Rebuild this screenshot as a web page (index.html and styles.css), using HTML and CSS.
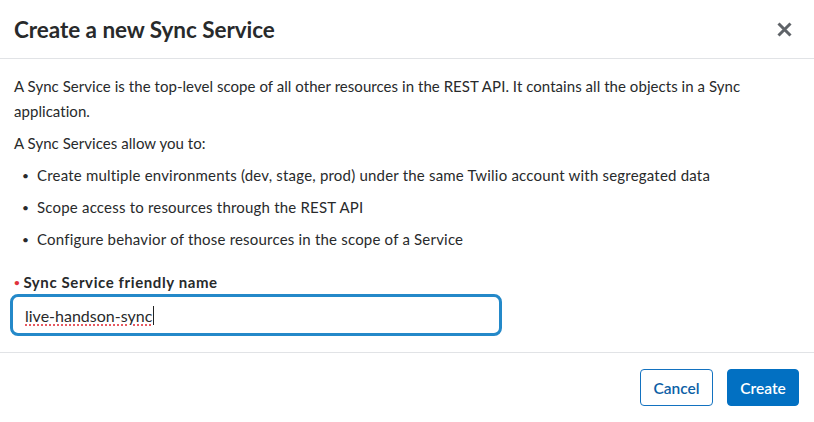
FILE: index.html
```html
<!DOCTYPE html>
<html>
<head>
<meta charset="utf-8">
<link rel="stylesheet" href="styles.css">
</head>
<body>
<div class="modal">
  <header class="modal-header">
    <h1 class="title">Create a new Sync Service</h1>
    <button class="close" aria-label="Close">
      <svg width="15" height="15" viewBox="0 0 15 15"><path d="M1.5 1.5 L13.5 13.5 M13.5 1.5 L1.5 13.5" stroke="#5f6368" stroke-width="3"/></svg>
    </button>
  </header>
  <main class="modal-body">
    <p class="para">A Sync Service is the top-level scope of all other resources in the REST API. It contains all the objects in a Sync application.</p>
    <p class="para">A Sync Services allow you to:</p>
    <ul class="list">
      <li>Create multiple environments (dev, stage, prod) under the same Twilio account with segregated data</li>
      <li>Scope access to resources through the REST API</li>
      <li>Configure behavior of those resources in the scope of a Service</li>
    </ul>
    <label class="label"><span class="req">•</span>Sync Service friendly name</label>
    <div class="input"><span class="value">live-handson-sync</span><span class="caret"></span></div>
  </main>
  <footer class="modal-footer">
    <button class="btn btn-secondary">Cancel</button>
    <button class="btn btn-primary">Create</button>
  </footer>
</div>
</body>
</html>
```
FILE: styles.css
```css
html, body { margin: 0; padding: 0; background: #fff; }
body { font-family: Lato, "Open Sans", sans-serif; color: #282a2b; }
.modal { width: 814px; height: 422px; display: flex; flex-direction: column; }
.modal-header {
  height: 59px; box-sizing: border-box; border-bottom: 1px solid #e1e3e6;
  display: flex; align-items: center; justify-content: space-between;
  padding: 0 22px 0 14px;
}
.title { margin: 0; font-size: 22.5px; font-weight: 700; color: #282a2b; letter-spacing: -0.05px; }
.close { border: 0; background: none; padding: 0; width: 15px; height: 15px; display: flex; cursor: pointer; }
.modal-body { padding: 15px 14px 0 14px; height: 294px; box-sizing: border-box; border-bottom: 1px solid #e1e3e6; }
.para { margin: 0 0 7px 0; font-size: 15px; line-height: 25px; padding-right: 40px; letter-spacing: 0.05px; }
.list { margin: 0; padding: 0 0 0 8px; list-style: none; }
.list li { font-size: 15px; line-height: 25px; margin-top: 7px; position: relative; padding-left: 15px; letter-spacing: 0.2px; }
.list li::before { content: "•"; position: absolute; left: 0; top: 0; font-size: 12px; }
.label { display: block; margin-top: 20px; font-size: 15px; font-weight: 700; line-height: 20px; letter-spacing: 0.6px; }
.req { color: #e0323c; font-size: 10px; margin-right: 3px; vertical-align: 2px; }
.input {
  margin: 2px 0 0 -4px; width: 492px; height: 42px; box-sizing: border-box;
  border: 3px solid #2489c9; border-radius: 8px;
  display: flex; align-items: center; padding-left: 12px;
  font-size: 16px;
}
.value { text-decoration: underline dotted #e0323c; text-underline-offset: 3px; }
.caret { display: inline-block; width: 1px; height: 19px; background: #222; margin-left: 1px; }
.modal-footer { flex: 1; display: flex; justify-content: flex-end; align-items: center; gap: 14px; padding: 0 15px 0 0; }
.btn { font-family: Lato, "Open Sans", sans-serif; font-size: 15.5px; font-weight: 600; height: 37px; border-radius: 4px; padding: 0; cursor: pointer; }
.btn-secondary { background: #fff; color: #0d5fa6; border: 1px solid #1372c0; width: 73px; }
.btn-primary { background: #0270c2; color: #fff; border: 1px solid #0270c2; width: 72px; }
```
